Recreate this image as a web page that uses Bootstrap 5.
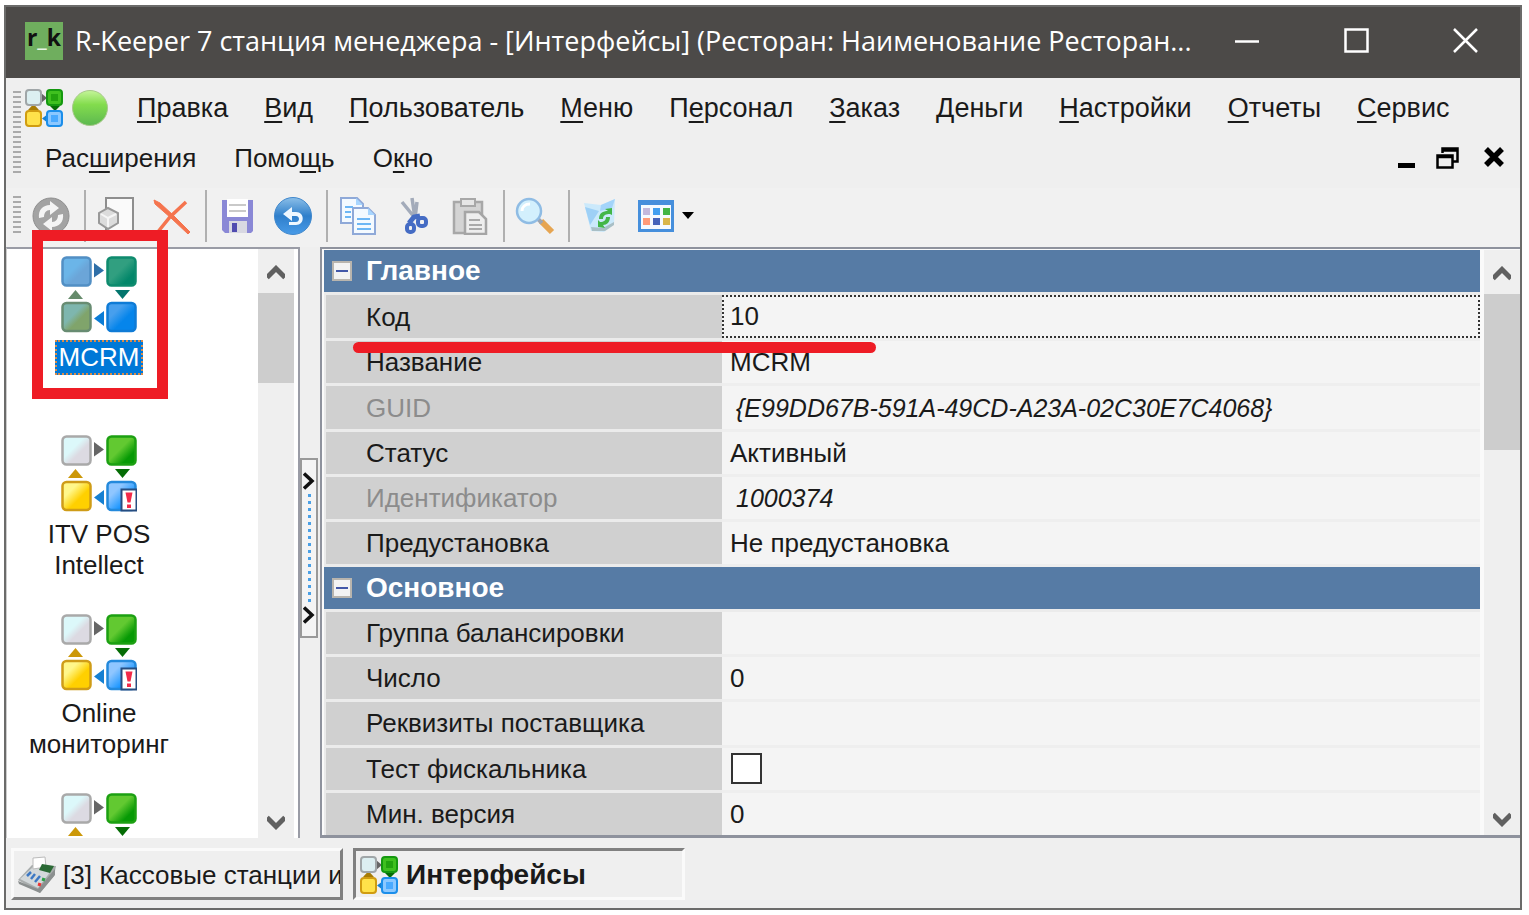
<!DOCTYPE html>
<html lang="ru">
<head>
<meta charset="utf-8">
<meta name="viewport" content="width=device-width, initial-scale=1">
<title>R-Keeper 7 станция менеджера</title>
<link rel="stylesheet" href="https://cdn.jsdelivr.net/npm/bootstrap@5.3.0/dist/css/bootstrap.min.css">
<style>
:root { --face: #efefef; --edge: #9a9ca6; --head: #567ba5; --mark: #ee1c25; }
body { background: #fff; font-family: "Liberation Sans", Arial, sans-serif; font-size: 26px; line-height: 32px; color: #1a1a1a; }
button { font: inherit; color: inherit; background: none; border: 0; padding: 0; }
svg { display: block; flex: none; }
.app-window { margin: 5px 7px 5px 4px; height: calc(100vh - 10px); border: 2px solid #6b6b6a; background: var(--face); }
.title-bar { background: #4c4a48; color: #fff; height: 71px; font-family: "Open Sans", "Noto Sans", sans-serif; font-size: 27px; padding: 0 42px 4px 19px; }
.title-text { margin: 0 0 0 12px; font-size: inherit; font-weight: 400; line-height: 40px; }
.title-buttons { gap: 84px; }
.app-logo { width: 38px; height: 38px; background: #6fae5e; color: #111; font: 700 23px/30px "Open Sans", sans-serif; }
.app-logo span { color: #e8f5e4; }
.menu-area { padding: 5px 16px 4px 7px; height: 110px; }
.grip { width: 8px; background: repeating-linear-gradient(#aaa 0 2px, transparent 2px 5px); }
.menu-row { height: 50px; gap: 38px; }
.menu-row a { color: inherit; text-decoration: none; }
.menu-row u { text-underline-offset: 4px; text-decoration-thickness: 2px; }
.menu-row.first-row { font-size: 27px; gap: 28px; }
.menu-links { gap: 36px; }
.doc-buttons { gap: 20px; }
.tool-bar { height: 59px; padding: 0 7px 4px; background: #f1f1f1; }
.tool-btn { width: 40px; display: flex; justify-content: center; }
.grip + .tool-btn { margin-left: 10px; }
.tool-btn + .tool-btn { margin-left: 16px; }
.tool-sep { width: 2px; height: 52px; background: #b0b0b0; margin: 0 10px 0 13px; }
.list-pane { width: 294px; border-top: 2px solid var(--edge); border-right: 2px solid var(--edge); border-left: 1px solid #ccc; background: #fff; }
.icon-list { width: 184px; padding: 7px 0 0; margin: 0; list-style: none; }
.icon-list li { height: 179px; line-height: 31px; }
.icon-list svg { margin: 0 auto 7px; }
.icon-list button { line-height: 31px; }
.icon-list .chosen { background: #0078d7; color: #fff; outline: 2px dotted #d98b4a; outline-offset: -2px; padding: 2px 4px; }
.scroll-rail { width: 36px; background: var(--face); }
.scroll-rail svg { margin: 16px auto 13px; }
.thumb { background: #cdcdcd; }
.splitter { width: 20px; padding-top: 10px; }
.splitter button { width: 18px; height: 180px; border: 2px solid #999; background: #f4f4f4; padding: 12px 0; }
.dots { width: 3px; background: repeating-linear-gradient(#4aa0e6 0 3px, transparent 3px 7px); }
.prop-pane { border: 2px solid #8e929d; border-right: 0; border-bottom-width: 3px; background: #fafafa; padding: 1px 0 0 2px; }
.prop-table { width: 100%; height: calc(100% + 3px); border-collapse: separate; border-spacing: 0; table-layout: fixed; }
.prop-table th, .prop-table td { padding: 0; height: 45px; line-height: 30px; border-bottom: 3px solid #ebebeb; vertical-align: middle; font-weight: 400; white-space: nowrap; }
.prop-table th[scope=row] { background: #d0d0d0; border-left: 2px solid #ebebeb; padding-left: 40px; }
.prop-table td { background: #f4f4f4; padding-left: 8px; border-bottom-color: #eee; }
.prop-table .group-head { background: var(--head); color: #fff; font-weight: 700; font-size: 28px; }
.prop-table .faded { color: #8c8c8c; }
.prop-table em { padding-left: 6px; font-size: 25px; }
.prop-table td.code-cell { padding: 0; }
.code-cell input { width: 100%; height: 43px; border: 2px dotted #333; background: transparent; padding: 0 6px; outline: 0; color: inherit; }
.box-toggle { appearance: none; width: 31px; height: 31px; border: 2px solid #333; background: #fff; margin: 0 0 0 1px; }
.fold { width: 20px; height: 20px; background: #f3f3f3; border: 2px solid #b9b5ae; margin: 0 14px 0 8px; }
.fold i { width: 12px; height: 2px; background: #4358a8; }
.task-bar { height: 70px; padding: 10px 5px; gap: 10px; }
.task-bar button { width: 332px; height: 52px; overflow: hidden; white-space: nowrap; border: 3px solid; padding: 2px 0 0 4px; }
.task-bar .task-up { border-color: #fafafa #808080 #808080 #fafafa; gap: 7px; }
.task-bar .task-down { border-color: #808080 #fafafa #fafafa #808080; font-weight: 700; font-size: 28px; gap: 8px; }
.mark-box { left: 26px; top: -17px; width: 136px; height: 169px; border: 11px solid var(--mark); z-index: 2; pointer-events: none; }
.mark-line { left: 347px; top: 95px; width: 523px; height: 11px; border-radius: 6px; background: var(--mark); z-index: 2; pointer-events: none; }
</style>
</head>
<body>
<svg width="0" height="0" class="position-absolute" aria-hidden="true">
  <defs>
    <linearGradient id="gw" x2="1" y2="1"><stop offset=".4" stop-color="#dcf8fa"/><stop offset=".6" stop-color="#dcdae2"/></linearGradient>
    <linearGradient id="gg" x2="1" y2="1"><stop offset=".45" stop-color="#62c931"/><stop offset=".75" stop-color="#079a05"/></linearGradient>
    <linearGradient id="gy" x2="1" y2="1"><stop offset=".3" stop-color="#fff78a"/><stop offset=".6" stop-color="#ffd000"/></linearGradient>
    <linearGradient id="gb" x2="1" y2="1"><stop offset=".3" stop-color="#8fc6ff"/><stop offset=".7" stop-color="#1393ff"/></linearGradient>
    <linearGradient id="sw" x2="1" y2="1"><stop offset=".4" stop-color="#6bb5e8"/><stop offset=".6" stop-color="#6ba5d8"/></linearGradient>
    <linearGradient id="sg" x2="1" y2="1"><stop offset=".45" stop-color="#319f80"/><stop offset=".75" stop-color="#03876a"/></linearGradient>
    <linearGradient id="sy" x2="1" y2="1"><stop offset=".4" stop-color="#7eb6ae"/><stop offset=".6" stop-color="#80a46b"/></linearGradient>
    <linearGradient id="sb" x2="1" y2="1"><stop offset=".3" stop-color="#479fed"/><stop offset=".6" stop-color="#0585eb"/></linearGradient>
    <linearGradient id="ball" x2="0" y2="1"><stop stop-color="#c5f59a"/><stop offset=".4" stop-color="#83dc4d"/><stop offset="1" stop-color="#5cb850"/></linearGradient>
    <linearGradient id="blue" x2="0" y2="1"><stop stop-color="#8bbfe8"/><stop offset=".5" stop-color="#2f7fcb"/><stop offset="1" stop-color="#489be8"/></linearGradient>
    <symbol id="flow" viewBox="0 0 76 77">
      <g stroke-width="2.5">
        <rect x="1.5" y="1.5" width="28" height="28" rx="4" fill="url(#gw)" stroke="#a9a9a9"/>
        <rect x="46.5" y="1.5" width="28" height="28" rx="4" fill="url(#gg)" stroke="#1ca012"/>
        <rect x="1.5" y="47" width="28" height="28" rx="4" fill="url(#gy)" stroke="#cf9c17"/>
        <rect x="46.5" y="47" width="28" height="28" rx="4" fill="url(#gb)" stroke="#2389dc"/>
      </g>
      <path d="M33 7l10 7.5-10 7z" fill="#666"/><path d="M54 34h15l-7.5 9z" fill="#056c05"/><path d="M43 55v15l-10-7.5z" fill="#1680d2"/><path d="M7 43h15l-7.5-9z" fill="#cc9808"/>
    </symbol>
    <symbol id="flow-alert" viewBox="0 0 76 77">
      <use href="#flow"/>
      <rect x="60.5" y="54.5" width="15" height="21" fill="#fff" stroke="#264d80" stroke-width="2"/>
      <path d="M64.5 57.5h7l-2 10h-3zM66 69.5h4v3.5h-4z" fill="#f22a49"/>
    </symbol>
    <symbol id="flow-chosen" viewBox="0 0 76 77">
      <g stroke-width="2.5">
        <rect x="1.5" y="1.5" width="28" height="28" rx="4" fill="url(#sw)" stroke="#528fc4"/>
        <rect x="46.5" y="1.5" width="28" height="28" rx="4" fill="url(#sg)" stroke="#0e8b6e"/>
        <rect x="1.5" y="47" width="28" height="28" rx="4" fill="url(#sy)" stroke="#688c72"/>
        <rect x="46.5" y="47" width="28" height="28" rx="4" fill="url(#sb)" stroke="#0f7bd6"/>
      </g>
      <path d="M33 7l10 7.5-10 7z" fill="#2f6fa8"/><path d="M54 34h15l-7.5 9z" fill="#03756d"/><path d="M43 55v15l-10-7.5z" fill="#0b7cd6"/><path d="M7 43h15l-7.5-9z" fill="#668b6b"/>
    </symbol>
    <symbol id="flow-mini" viewBox="0 0 38 38">
      <path d="M16 4l6 5-6 5z" fill="#666"/><path d="M25 17h10l-5 5z" fill="#056c05"/><path d="M23 25v9l-6-4.5z" fill="#1680d2"/><path d="M3 21h11l-5.5-6z" fill="#a77c05"/>
      <g stroke-width="2">
        <rect x="1" y="1" width="15" height="15" rx="3" fill="#dceff1" stroke="#a0a6a8"/><rect x="22" y="1" width="15" height="15" rx="3" fill="#3fc01f" stroke="#14980f"/>
        <rect x="1" y="22" width="15" height="15" rx="3" fill="#ffe24a" stroke="#d09c10"/><rect x="22" y="22" width="15" height="15" rx="3" fill="#8cc8ff" stroke="#1b8eea"/>
      </g>
      <path d="M26 5h7v7h-7z" fill="#22a30e"/><path d="M26 26h7v7h-7z" fill="#4aaaff"/>
    </symbol>
    <symbol id="up" viewBox="0 0 18 15"><path d="M0 12.5l9-9 9 9" fill="none" stroke="#606060" stroke-width="5"/></symbol>
    <symbol id="down" viewBox="0 0 18 15"><path d="M0 2.5l9 9 9-9" fill="none" stroke="#606060" stroke-width="5"/></symbol>
    <symbol id="next" viewBox="0 0 12 18"><path d="M1 1.5L9 9l-8 7.5" fill="none" stroke="#111" stroke-width="3.5"/></symbol>
  </defs>
</svg>

<div class="app-window d-flex flex-column overflow-hidden">
  <header class="title-bar d-flex align-items-center flex-shrink-0">
    <div class="app-logo text-center flex-shrink-0">r<span>_</span>k</div>
    <h1 class="title-text flex-grow-1 text-nowrap">R-Keeper 7 станция менеджера - [Интерфейсы] (Ресторан: Наименование Ресторан...</h1>
    <div class="title-buttons d-flex flex-shrink-0">
      <button aria-label="Свернуть"><svg width="25" height="25"><path d="M0 13.5h24" stroke="#fff" stroke-width="2.5"/></svg></button>
      <button aria-label="Развернуть"><svg width="25" height="25"><path d="M1.5 1.5h22v22h-22z" fill="none" stroke="#fff" stroke-width="2.5"/></svg></button>
      <button aria-label="Закрыть"><svg width="25" height="25"><path d="M1 1l23 23M24 1L1 24" stroke="#fff" stroke-width="2.5"/></svg></button>
    </div>
  </header>

  <nav class="menu-area d-flex flex-shrink-0">
    <div class="grip my-2"></div>
    <div class="flex-grow-1">
      <div class="menu-row first-row d-flex align-items-center text-nowrap ps-1">
        <div class="d-flex align-items-center gap-2">
          <svg width="38" height="38"><use href="#flow-mini"/></svg>
          <svg width="38" height="38"><circle cx="19" cy="19" r="17.5" fill="url(#ball)" stroke="#a7c98a"/></svg>
        </div>
        <div class="menu-links d-flex">
          <a href="#"><u>П</u>равка</a>
          <a href="#"><u>В</u>ид</a>
          <a href="#"><u>П</u>ользователь</a>
          <a href="#"><u>М</u>еню</a>
          <a href="#">П<u>е</u>рсонал</a>
          <a href="#"><u>З</u>аказ</a>
          <a href="#"><u>Д</u>еньги</a>
          <a href="#"><u>Н</u>астройки</a>
          <a href="#"><u>О</u>тчеты</a>
          <a href="#"><u>С</u>ервис</a>
        </div>
      </div>
      <div class="menu-row d-flex align-items-center text-nowrap ps-4">
        <a href="#">Рас<u>ш</u>ирения</a>
        <a href="#">Помо<u>щ</u>ь</a>
        <a href="#">О<u>к</u>но</a>
        <div class="doc-buttons d-flex ms-auto align-items-center">
          <button aria-label="Свернуть документ"><svg width="18" height="22"><path d="M0 16h17v5H0z"/></svg></button>
          <button aria-label="Восстановить документ"><svg width="24" height="22"><path d="M6.5 6V1.5h15v13H17M6 3.5h16M1.5 8.5h15v12h-15zM1 10h16" fill="none" stroke="#000" stroke-width="2.5"/></svg></button>
          <button class="ms-1" aria-label="Закрыть документ"><svg width="20" height="22"><path d="M2 2l16 16M18 2L2 18" stroke="#000" stroke-width="5.5"/></svg></button>
        </div>
      </div>
    </div>
  </nav>

  <div class="tool-bar d-flex align-items-center flex-shrink-0" role="toolbar">
    <div class="grip align-self-stretch my-2"></div>
    <button class="tool-btn" aria-label="Обновить"><svg width="38" height="38" viewBox="0 0 38 38"><circle cx="19" cy="19" r="18" fill="#a3a3a3" stroke="#8f8f8f"/><path d="M7 21c-1-8 4-13 11-13V4l9 7-9 7v-5c-4 0-6 3-6 7zM31 17c1 8-4 13-11 13v4l-9-7 9-7v5c4 0 6-3 6-7z" fill="#f4f4f4"/></svg></button>
    <div class="tool-sep"></div>
    <button class="tool-btn" aria-label="Создать"><svg width="38" height="40" viewBox="0 0 38 40"><path d="M9 2h27v36H9z" fill="#fafafa" stroke="#8e8e8e" stroke-width="2"/><path d="M11 12l10 5v10l-10 6-9-6V17z" fill="#dcdcdc" stroke="#999" stroke-width="2"/><path d="M4 18l7 4 8-4M11 22v9" fill="none" stroke="#f6f6f6" stroke-width="2"/></svg></button>
    <button class="tool-btn" aria-label="Удалить"><svg width="38" height="38" viewBox="0 0 38 38"><path d="M1 3l6 3 13 12 17 17-2 2L18 21 2 7z" fill="#f5744e" stroke="#f5744e"/><path d="M33 5L17 20 4 36" fill="none" stroke="#f5744e" stroke-width="3.5"/></svg></button>
    <div class="tool-sep"></div>
    <button class="tool-btn" aria-label="Сохранить"><svg width="31" height="34" viewBox="0 0 31 34"><path d="M0 1h31v31l-2 2H3l-3-3z" fill="#8a88d6"/><path d="M5 0h21v18H5z" fill="#fff"/><path d="M7 6h17M7 12h17" stroke="#c9c9c9" stroke-width="2"/><path d="M7 22h18v12H7z" fill="#d8d8e2"/><path d="M10 24h5v9h-5z" fill="#504bb0"/></svg></button>
    <button class="tool-btn" aria-label="Отменить"><svg width="38" height="38" viewBox="0 0 38 38"><circle cx="19" cy="19" r="18.5" fill="url(#blue)" stroke="#3f87cc"/><path d="M9 17l9-7v5h4c9 0 9 13 0 13h-7v-3h7c4 0 4-6 0-6h-4v5z" fill="#eef7ff"/></svg></button>
    <div class="tool-sep"></div>
    <button class="tool-btn" aria-label="Копировать"><svg width="38" height="40" viewBox="0 0 38 40"><g fill="#f4faff" stroke="#8fa9d8" stroke-width="2"><path d="M2 2h16l6 6v19H2z"/><path d="M14 12h15l7 7v19H14z"/></g><path d="M17 2v7h7M29 12v7h7" fill="#a8d6ff"/><path d="M6 11h8M6 16h6M6 21h6M18 23h13M18 28h14M18 33h14" stroke="#6db7f5" stroke-width="2"/></svg></button>
    <button class="tool-btn" aria-label="Вырезать"><svg width="29" height="38" viewBox="0 0 29 38"><path d="M2 5l13 16M12 1l3 20 2-16" fill="none" stroke="#a3abba" stroke-width="3.5"/><path d="M9 26l5-6 6-1" fill="none" stroke="#456cc4" stroke-width="5"/><rect x="18" y="21" width="8" height="8" rx="3" fill="none" stroke="#456cc4" stroke-width="4"/><rect x="7" y="27" width="7" height="8" rx="3" fill="none" stroke="#456cc4" stroke-width="4"/></svg></button>
    <button class="tool-btn" aria-label="Вставить"><svg width="36" height="38" viewBox="0 0 36 38"><path d="M2 5h28v31H2z" fill="#d4d4d4" stroke="#a8a8a8" stroke-width="2.5"/><path d="M9 2h14v7H9z" fill="#e6e6e6" stroke="#a8a8a8" stroke-width="2"/><path d="M13 15h14l7 7v15H13z" fill="#eee" stroke="#a5a5a5" stroke-width="2.5"/><path d="M17 23h11M17 28h13M17 32h13" stroke="#aaa" stroke-width="2"/></svg></button>
    <div class="tool-sep"></div>
    <button class="tool-btn" aria-label="Найти"><svg width="40" height="38" viewBox="0 0 40 38"><path d="M26 24l11 11" stroke="#e6a552" stroke-width="6"/><path d="M22 21l5 5" stroke="#9da6b3" stroke-width="4"/><circle cx="14" cy="14" r="12" fill="#d3f0fd" stroke="#8fbce4" stroke-width="2.5"/><path d="M7 14c0-4 3-7 8-7" fill="none" stroke="#fff" stroke-width="3"/></svg></button>
    <div class="tool-sep"></div>
    <button class="tool-btn" aria-label="Корзина"><svg width="32" height="34" viewBox="0 0 32 34"><path d="M0 4l17 2L31 0l-1 25-10 8-13-1z" fill="#cbe9fb"/><path d="M1 8l14 4-9 14z" fill="#9ed0f6"/><path d="M17 6l14-6-3 9-12 3z" fill="#a3d4fa"/><path d="M7 28l12 1 11-6v3l-9 6H8z" fill="#a9bfc6"/><path d="M15 20c0-6 4-8 9-8l-3-2 7-1v7l-2-1c-4 0-7 1-7 5zM26 18c0 5-3 8-7 8l2 3-7-1v-7l2 2c4 0 6-2 6-5z" fill="#43b648"/></svg></button>
    <button class="tool-btn" aria-label="Вид списка"><svg width="36" height="32" viewBox="0 0 36 32"><path d="M1.5 2h33v28.5h-33z" fill="#f5faff" stroke="#468fdc" stroke-width="3"/><path d="M0 0h36v5H0z" fill="#468fdc"/><path d="M5 8h7v7H5z" fill="#c3b8dc"/><path d="M15 8h7v7h-7z" fill="#429ff0"/><path d="M25 8h7v7h-7z" fill="#42b545"/><path d="M5 18h7v7H5z" fill="#ff9a78"/><path d="M15 18h7v7h-7z" fill="#4564bb"/><path d="M25 18h7v7h-7z" fill="#d8b64a"/></svg></button>
    <button class="ms-1" aria-label="Варианты вида"><svg width="16" height="12"><path d="M2 2h12l-6 7z"/></svg></button>
  </div>

  <main class="d-flex flex-grow-1 position-relative" style="min-height:0">
    <div class="mark-box position-absolute"></div>
    <div class="mark-line position-absolute"></div>
    <div class="list-pane d-flex flex-shrink-0">
      <div class="flex-grow-1 overflow-hidden">
        <ul class="icon-list text-center">
          <li><svg width="76" height="77"><use href="#flow-chosen"/></svg><button class="chosen">MCRM</button></li>
          <li><svg width="76" height="77"><use href="#flow-alert"/></svg><button>ITV POS<br>Intellect</button></li>
          <li><svg width="76" height="77"><use href="#flow-alert"/></svg><button>Online<br>мониторинг</button></li>
          <li><svg width="76" height="77"><use href="#flow-alert"/></svg></li>
        </ul>
      </div>
      <div class="scroll-rail d-flex flex-column flex-shrink-0 me-1"><svg width="18" height="15"><use href="#up"/></svg><div class="thumb" style="height:90px"></div><svg class="mt-auto mb-2" width="18" height="15"><use href="#down"/></svg></div>
    </div>
    <div class="splitter d-flex align-items-center flex-shrink-0">
      <button class="d-flex flex-column align-items-center justify-content-between" aria-label="Показать панель"><svg width="12" height="18"><use href="#next"/></svg><span class="dots flex-grow-1 my-1"></span><svg width="12" height="18"><use href="#next"/></svg></button>
    </div>
    <div class="prop-pane d-flex flex-grow-1 overflow-hidden">
      <div class="flex-grow-1 h-100">
        <table class="prop-table">
          <colgroup><col style="width:398px"><col></colgroup>
          <tbody>
            <tr><th class="group-head" colspan="2"><div class="d-flex align-items-center"><button class="fold d-flex align-items-center justify-content-center" aria-label="Свернуть группу"><i></i></button>Главное</div></th></tr>
            <tr><th scope="row"><label for="code">Код</label></th><td class="code-cell"><input id="code" type="text" value="10"></td></tr>
            <tr><th scope="row">Название</th><td>MCRM</td></tr>
            <tr><th scope="row" class="faded">GUID</th><td><em>{E99DD67B-591A-49CD-A23A-02C30E7C4068}</em></td></tr>
            <tr><th scope="row">Статус</th><td>Активный</td></tr>
            <tr><th scope="row" class="faded">Идентификатор</th><td><em>1000374</em></td></tr>
            <tr><th scope="row">Предустановка</th><td>Не предустановка</td></tr>
            <tr><th class="group-head" colspan="2"><div class="d-flex align-items-center"><button class="fold d-flex align-items-center justify-content-center" aria-label="Свернуть группу"><i></i></button>Основное</div></th></tr>
            <tr><th scope="row">Группа балансировки</th><td></td></tr>
            <tr><th scope="row">Число</th><td>0</td></tr>
            <tr><th scope="row">Реквизиты поставщика</th><td></td></tr>
            <tr><th scope="row"><label for="fisc">Тест фискальника</label></th><td><input class="box-toggle d-block" id="fisc" type="checkbox"></td></tr>
            <tr><th scope="row">Мин. версия</th><td>0</td></tr>
          </tbody>
        </table>
      </div>
      <div class="scroll-rail d-flex flex-column flex-shrink-0 ms-1"><svg width="18" height="15"><use href="#up"/></svg><div class="thumb" style="height:156px"></div><svg class="mt-auto mb-2" width="18" height="15"><use href="#down"/></svg></div>
    </div>
  </main>

  <footer class="task-bar d-flex flex-shrink-0">
    <button class="task-up d-flex align-items-center"><svg width="38" height="38" viewBox="0 0 38 38"><path d="M0 24L14 9l24 1-2 10-14 17z" fill="#a9adad"/><path d="M2 23L15 11l18 4-13 17z" fill="#d3d8da"/><path d="M0 25l20 8 17-20v6L22 37 1 28z" fill="#8b8f8f"/><path d="M15 2l12-1 1 10-13 2z" fill="#fff" stroke="#bbb"/><path d="M24 8l12 2-4 7-11-3z" fill="#2b6a35"/><path d="M9 20l4-4M13 23l4-5M17 26l5-6" stroke="#3d78c4" stroke-width="2.5"/><path d="M20 28l3 1" stroke="#e33" stroke-width="3"/><path d="M24 23l3 1" stroke="#2ba045" stroke-width="3"/></svg><span>[3] Кассовые станции и</span></button>
    <button class="task-down d-flex align-items-center"><svg width="38" height="38"><use href="#flow-mini"/></svg><span>Интерфейсы</span></button>
  </footer>
</div>
<script src="https://cdn.jsdelivr.net/npm/bootstrap@5.3.0/dist/js/bootstrap.bundle.min.js"></script>
</body>
</html>
